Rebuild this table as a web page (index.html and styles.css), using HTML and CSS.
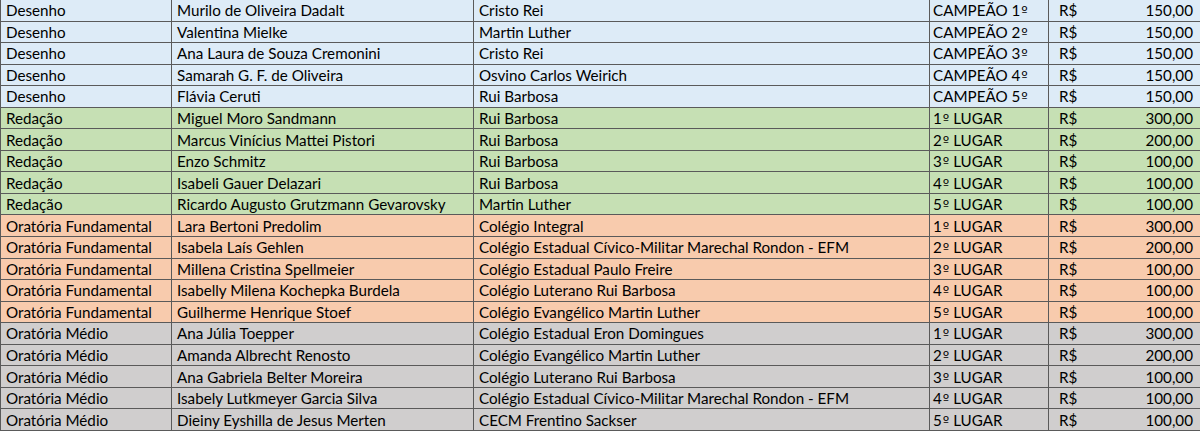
FILE: index.html
```html
<!DOCTYPE html>
<html lang="pt-BR">
<head>
<meta charset="utf-8">
<title>Premiação</title>
<link rel="stylesheet" href="styles.css">
</head>
<body>
<table class="sheet">
  <colgroup>
    <col class="c-cat"><col class="c-name"><col class="c-school"><col class="c-place"><col class="c-prize">
  </colgroup>
  <tbody>
    <tr class="blue"><td>Desenho</td><td>Murilo de Oliveira Dadalt</td><td>Cristo Rei</td><td class="place">CAMPEÃO 1<span class="ord">º</span></td><td class="prize"><span class="cur">R$</span><span class="amt">150,00</span></td></tr>
    <tr class="blue"><td>Desenho</td><td>Valentina Mielke</td><td>Martin Luther</td><td class="place">CAMPEÃO 2<span class="ord">º</span></td><td class="prize"><span class="cur">R$</span><span class="amt">150,00</span></td></tr>
    <tr class="blue"><td>Desenho</td><td>Ana Laura de Souza Cremonini</td><td>Cristo Rei</td><td class="place">CAMPEÃO 3<span class="ord">º</span></td><td class="prize"><span class="cur">R$</span><span class="amt">150,00</span></td></tr>
    <tr class="blue"><td>Desenho</td><td>Samarah G. F. de Oliveira</td><td>Osvino Carlos Weirich</td><td class="place">CAMPEÃO 4<span class="ord">º</span></td><td class="prize"><span class="cur">R$</span><span class="amt">150,00</span></td></tr>
    <tr class="blue"><td>Desenho</td><td>Flávia Ceruti</td><td>Rui Barbosa</td><td class="place">CAMPEÃO 5<span class="ord">º</span></td><td class="prize"><span class="cur">R$</span><span class="amt">150,00</span></td></tr>
    <tr class="green"><td>Redação</td><td>Miguel Moro Sandmann</td><td>Rui Barbosa</td><td class="place">1<span class="ord">º</span> LUGAR</td><td class="prize"><span class="cur">R$</span><span class="amt">300,00</span></td></tr>
    <tr class="green"><td>Redação</td><td>Marcus Vinícius Mattei Pistori</td><td>Rui Barbosa</td><td class="place">2<span class="ord">º</span> LUGAR</td><td class="prize"><span class="cur">R$</span><span class="amt">200,00</span></td></tr>
    <tr class="green"><td>Redação</td><td>Enzo Schmitz</td><td>Rui Barbosa</td><td class="place">3<span class="ord">º</span> LUGAR</td><td class="prize"><span class="cur">R$</span><span class="amt">100,00</span></td></tr>
    <tr class="green"><td>Redação</td><td>Isabeli Gauer Delazari</td><td>Rui Barbosa</td><td class="place">4<span class="ord">º</span> LUGAR</td><td class="prize"><span class="cur">R$</span><span class="amt">100,00</span></td></tr>
    <tr class="green"><td>Redação</td><td>Ricardo Augusto Grutzmann Gevarovsky</td><td>Martin Luther</td><td class="place">5<span class="ord">º</span> LUGAR</td><td class="prize"><span class="cur">R$</span><span class="amt">100,00</span></td></tr>
    <tr class="orange"><td>Oratória Fundamental</td><td>Lara Bertoni Predolim</td><td>Colégio Integral</td><td class="place">1<span class="ord">º</span> LUGAR</td><td class="prize"><span class="cur">R$</span><span class="amt">300,00</span></td></tr>
    <tr class="orange"><td>Oratória Fundamental</td><td>Isabela Laís Gehlen</td><td>Colégio Estadual Cívico-Militar Marechal Rondon - EFM</td><td class="place">2<span class="ord">º</span> LUGAR</td><td class="prize"><span class="cur">R$</span><span class="amt">200,00</span></td></tr>
    <tr class="orange"><td>Oratória Fundamental</td><td>Millena Cristina Spellmeier</td><td>Colégio Estadual Paulo Freire</td><td class="place">3<span class="ord">º</span> LUGAR</td><td class="prize"><span class="cur">R$</span><span class="amt">100,00</span></td></tr>
    <tr class="orange"><td>Oratória Fundamental</td><td>Isabelly Milena Kochepka Burdela</td><td>Colégio Luterano Rui Barbosa</td><td class="place">4<span class="ord">º</span> LUGAR</td><td class="prize"><span class="cur">R$</span><span class="amt">100,00</span></td></tr>
    <tr class="orange"><td>Oratória Fundamental</td><td>Guilherme Henrique Stoef</td><td>Colégio Evangélico Martin Luther</td><td class="place">5<span class="ord">º</span> LUGAR</td><td class="prize"><span class="cur">R$</span><span class="amt">100,00</span></td></tr>
    <tr class="gray"><td>Oratória Médio</td><td>Ana Júlia Toepper</td><td>Colégio Estadual Eron Domingues</td><td class="place">1<span class="ord">º</span> LUGAR</td><td class="prize"><span class="cur">R$</span><span class="amt">300,00</span></td></tr>
    <tr class="gray"><td>Oratória Médio</td><td>Amanda Albrecht Renosto</td><td>Colégio Evangélico Martin Luther</td><td class="place">2<span class="ord">º</span> LUGAR</td><td class="prize"><span class="cur">R$</span><span class="amt">200,00</span></td></tr>
    <tr class="gray"><td>Oratória Médio</td><td>Ana Gabriela Belter Moreira</td><td>Colégio Luterano Rui Barbosa</td><td class="place">3<span class="ord">º</span> LUGAR</td><td class="prize"><span class="cur">R$</span><span class="amt">100,00</span></td></tr>
    <tr class="gray"><td>Oratória Médio</td><td>Isabely Lutkmeyer Garcia Silva</td><td>Colégio Estadual Cívico-Militar Marechal Rondon - EFM</td><td class="place">4<span class="ord">º</span> LUGAR</td><td class="prize"><span class="cur">R$</span><span class="amt">100,00</span></td></tr>
    <tr class="gray"><td>Oratória Médio</td><td>Dieiny Eyshilla de Jesus Merten</td><td>CECM Frentino Sackser</td><td class="place">5<span class="ord">º</span> LUGAR</td><td class="prize"><span class="cur">R$</span><span class="amt">100,00</span></td></tr>
  </tbody>
</table>
</body>
</html>
```
FILE: styles.css
```css
html, body {
  margin: 0;
  padding: 0;
  background: #ffffff;
  overflow: hidden;
}

.sheet {
  border-collapse: collapse;
  table-layout: fixed;
  width: 1201px;
  margin-top: -1px;
  font-family: Lato, "Open Sans", sans-serif;
  font-size: 15.2px;
  color: #000;
}

.c-cat { width: 171px; }
.c-name { width: 302px; }
.c-school { width: 456px; }
.c-place { width: 119px; }
.c-prize { width: 153px; }

.sheet td {
  height: 20.55px;
  padding: 0 0 0 5px;
  border: 1px solid #5a5a5a;
  white-space: nowrap;
  overflow: hidden;
  line-height: 20px;
  vertical-align: middle;
}

.sheet td.place { padding-left: 3px; }

.sheet td.prize {
  padding: 0 8px 0 10px;
}

.cur { float: left; }
.amt { float: right; }

.ord {
  font-family: "DejaVu Sans", sans-serif;
  font-size: 0.9em;
  line-height: 0;
  margin-left: 1px;
}

.blue td { background: #ddebf7; }
.green td { background: #c6e0b4; }
.orange td { background: #f8cbad; }
.gray td { background: #d0cece; }
```
